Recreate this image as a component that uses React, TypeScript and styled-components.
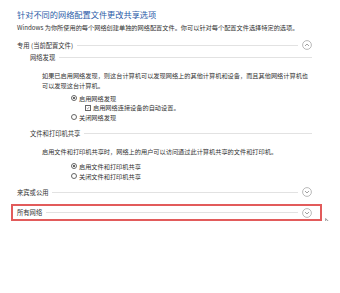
import * as React from "react"
import styled, { createGlobalStyle } from "styled-components"

const GlobalStyle = createGlobalStyle`
  html, body {
    margin: 0;
    padding: 0;
    background: #fff;
  }
  body {
    font-family: "Noto Sans CJK SC", "Noto Sans", sans-serif;
    color: #2b2b2b;
  }
`

const ToggleIcon = ({ up }: { up?: boolean }) => (
  <svg width="10" height="10" viewBox="0 0 10 10">
    <circle cx="5" cy="5" r="4.4" fill="#fff" stroke="#a8a8a8" strokeWidth="0.8" />
    {up ? (
      <polyline points="3,6 5,4 7,6" fill="none" stroke="#8a8a8a" strokeWidth="0.8" />
    ) : (
      <polyline points="3,4 5,6 7,4" fill="none" stroke="#8a8a8a" strokeWidth="0.8" />
    )}
  </svg>
)

const Cursor = () => (
  <svg width="9" height="13" viewBox="0 0 8 12">
    <path d="M0.5 0.5 L0.5 10 L2.8 7.8 L4.4 11.2 L5.8 10.6 L4.3 7.3 L7.3 7.3 Z" fill="#fff" stroke="#777" strokeWidth="0.7" />
  </svg>
)

const App = () => {
  return (
    <>
      <GlobalStyle />
      <Page>
        <Title>针对不同的网络配置文件更改共享选项</Title>
        <Desc>Windows 为你所使用的每个网络创建单独的网络配置文件。你可以针对每个配置文件选择特定的选项。</Desc>

        <SectionRow $top={7}>
          <span>专用 (当前配置文件)</span>
          <Line />
          <ToggleIcon up />
        </SectionRow>

        <SubRow $top={2}>
          <span>网络发现</span>
          <Line />
        </SubRow>
        <Para $top={9}>
          如果已启用网络发现，则这台计算机可以发现网络上的其他计算机和设备，而且其他网络计算机也可以发现这台计算机。
        </Para>
        <Options $top={2.5}>
          <Option $h={9.5}>
            <Radio $checked />
            启用网络发现
          </Option>
          <Option $h={9.5} $indent>
            <Check>
              <svg width="6" height="6" viewBox="0 0 6 6">
                <polyline points="1.1,3.1 2.4,4.4 4.9,1.4" fill="none" stroke="#444" strokeWidth="0.7" />
              </svg>
            </Check>
            启用网络连接设备的自动设置。
          </Option>
          <Option $h={9.5}>
            <Radio />
            关闭网络发现
          </Option>
        </Options>

        <SubRow $top={6}>
          <span>文件和打印机共享</span>
          <Line />
        </SubRow>
        <Para $top={9}>启用文件和打印机共享时，网络上的用户可以访问通过此计算机共享的文件和打印机。</Para>
        <Options $top={4}>
          <Option $h={10}>
            <Radio $checked />
            启用文件和打印机共享
          </Option>
          <Option $h={10}>
            <Radio />
            关闭文件和打印机共享
          </Option>
        </Options>

        <SectionRow $top={6}>
          <span>来宾或公用</span>
          <Line />
          <ToggleIcon />
        </SectionRow>

        <Highlight>
          <SectionRow $top={0} $h={13}>
            <span>所有网络</span>
            <Line />
            <ToggleIcon />
          </SectionRow>
          <CursorSpot>
            <Cursor />
          </CursorSpot>
        </Highlight>
      </Page>
    </>
  )
}

export default App

// Styles
const Page = styled.div`
  width: 295px;
  padding: 0 0 0 17px;
  display: flex;
  flex-direction: column;
`

const Title = styled.div`
  margin-top: 8px;
  height: 12px;
  line-height: 12px;
  font-size: 8.2px;
  color: #2a5ba8;
  white-space: nowrap;
`

const Desc = styled.div`
  margin-top: 3px;
  height: 10px;
  line-height: 10px;
  font-size: 6.2px;
  color: #333;
  white-space: nowrap;
`

const SectionRow = styled.div<{ $top: number; $h?: number }>`
  margin-top: ${(p) => p.$top}px;
  height: ${(p) => p.$h ?? 10}px;
  display: flex;
  align-items: center;
  gap: 4px;
  font-size: 6.3px;
  color: #333;
  white-space: nowrap;

  svg {
    flex: none;
  }
`

const SubRow = styled(SectionRow)`
  padding-left: 13px;
`

const Line = styled.div`
  flex: 1;
  height: 1px;
  background: #e2e2e2;
`

const Para = styled.div<{ $top: number }>`
  margin-top: ${(p) => p.$top}px;
  padding-left: 25px;
  width: 272px;
  line-height: 10px;
  font-size: 6.2px;
  color: #333;
`

const Options = styled.div<{ $top: number }>`
  margin-top: ${(p) => p.$top}px;
  padding-left: 54px;
  display: flex;
  flex-direction: column;
`

const Option = styled.div<{ $h: number; $indent?: boolean }>`
  height: ${(p) => p.$h}px;
  display: flex;
  align-items: center;
  gap: 2px;
  padding-left: ${(p) => (p.$indent ? 14 : 0)}px;
  font-size: 6.2px;
  color: #333;
  white-space: nowrap;
`

const Radio = styled.span<{ $checked?: boolean }>`
  width: 6px;
  height: 6px;
  box-sizing: border-box;
  border: 0.7px solid #666;
  border-radius: 50%;
  display: inline-flex;
  align-items: center;
  justify-content: center;

  &::after {
    content: "";
    width: 2.4px;
    height: 2.4px;
    border-radius: 50%;
    background: ${(p) => (p.$checked ? "#333" : "transparent")};
  }
`

const Check = styled.span`
  width: 6px;
  height: 6px;
  box-sizing: border-box;
  border: 0.7px solid #666;
  display: inline-flex;
  align-items: center;
  justify-content: center;
  line-height: 0;
`

const Highlight = styled.div`
  position: relative;
  margin: 7px -10px 0 -6px;
  padding: 0 8px 0 4px;
  border: 2px solid #e25b5b;
`

const CursorSpot = styled.div`
  position: absolute;
  left: 312px;
  top: 12px;
  line-height: 0;
`
